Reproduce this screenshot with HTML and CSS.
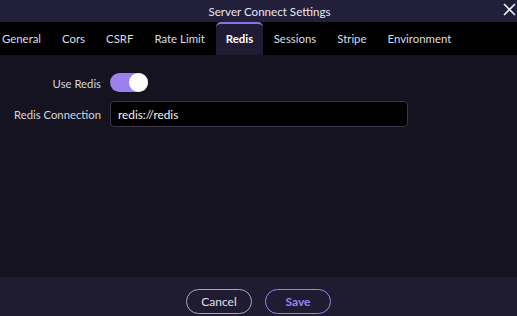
FILE: index.html
```html
<!DOCTYPE html>
<html lang="en">
<head>
  <meta charset="UTF-8">
  <title>Server Connect Settings</title>
  <link rel="stylesheet" href="styles.css">
</head>
<body>
  <div class="dialog">
    <div class="title-bar">
      <span class="title">Server Connect Settings</span>
      <span class="close">
        <svg width="13" height="13" viewBox="0 0 13 13"><path d="M1 1 L12 12 M12 1 L1 12" stroke="#eeeef4" stroke-width="1.6" fill="none"/></svg>
      </span>
    </div>

    <div class="tabs">
      <div class="tab">General</div>
      <div class="tab">Cors</div>
      <div class="tab">CSRF</div>
      <div class="tab">Rate Limit</div>
      <div class="tab active">Redis</div>
      <div class="tab">Sessions</div>
      <div class="tab">Stripe</div>
      <div class="tab">Environment</div>
    </div>

    <div class="content">
      <div class="row">
        <label class="label">Use Redis</label>
        <div class="toggle"><span class="knob"></span></div>
      </div>
      <div class="row">
        <label class="label">Redis Connection</label>
        <input type="text" class="input-field" value="redis://redis">
      </div>
    </div>

    <div class="footer">
      <button class="btn">Cancel</button>
      <button class="btn btn-primary">Save</button>
    </div>
  </div>
</body>
</html>
```

FILE: styles.css
```css
body {
  margin: 0;
  padding: 0;
  background: #15131f;
  font-family: 'Lato', sans-serif;
  height: 100vh;
  overflow: hidden;
}

.dialog {
  height: 316px;
  display: flex;
  flex-direction: column;
}

.title-bar {
  height: 22px;
  background-color: #221f3a;
  display: flex;
  justify-content: center;
  align-items: center;
  padding-left: 22px;
  position: relative;
}

.title {
  color: #e6e6ee;
  font-size: 11.6px;
}

.close {
  position: absolute;
  right: 1px;
  top: 3px;
  line-height: 0;
}

.tabs {
  height: 33px;
  background-color: #000;
  display: flex;
  align-items: stretch;
  padding-left: 2px;
}

.tab {
  color: #dcdce4;
  font-size: 11.4px;
  display: flex;
  align-items: center;
  padding: 0 10.5px;
}

.tab:first-child {
  padding-left: 0;
}

.tab.active {
  background-color: #1f1b33;
  border-top: 2px solid #8a72e8;
  border-radius: 5px 5px 0 0;
  color: #fff;
  font-weight: bold;
  padding: 0 9.5px 2px;
  margin: 0 0.5px 0 1px;
}

.content {
  flex: 1;
  background-color: #15131f;
  padding-top: 18px;
}

.row {
  display: flex;
  align-items: center;
  margin-bottom: 8px;
}

.label {
  width: 101px;
  text-align: right;
  color: #d6d6de;
  font-size: 11.3px;
  margin-right: 9px;
}

.toggle {
  width: 38px;
  height: 19px;
  border-radius: 10px;
  background-color: #9b80ee;
  position: relative;
  margin-bottom: 1px;
}

.knob {
  position: absolute;
  right: 0;
  top: 0;
  width: 19px;
  height: 19px;
  border-radius: 50%;
  background-color: #fff;
}

.input-field {
  width: 298px;
  height: 26px;
  box-sizing: border-box;
  background-color: #000;
  border: 1px solid #3a3848;
  border-radius: 4px;
  color: #f4f4f4;
  font-family: 'Lato', sans-serif;
  font-size: 11.8px;
  padding: 0 7px;
  outline: none;
}

.footer {
  height: 39px;
  background-color: #1f1c31;
  display: flex;
  justify-content: center;
  align-items: flex-start;
  gap: 13px;
  padding-top: 12px;
  box-sizing: border-box;
}

.btn {
  width: 66px;
  height: 25px;
  border-radius: 13px;
  background: transparent;
  border: 1px solid #a8a8b4;
  color: #e0e0e8;
  font-family: 'Lato', sans-serif;
  font-size: 12px;
  cursor: pointer;
}

.btn-primary {
  border-color: #9b80ee;
  color: #9b85f5;
  font-weight: bold;
}
```
